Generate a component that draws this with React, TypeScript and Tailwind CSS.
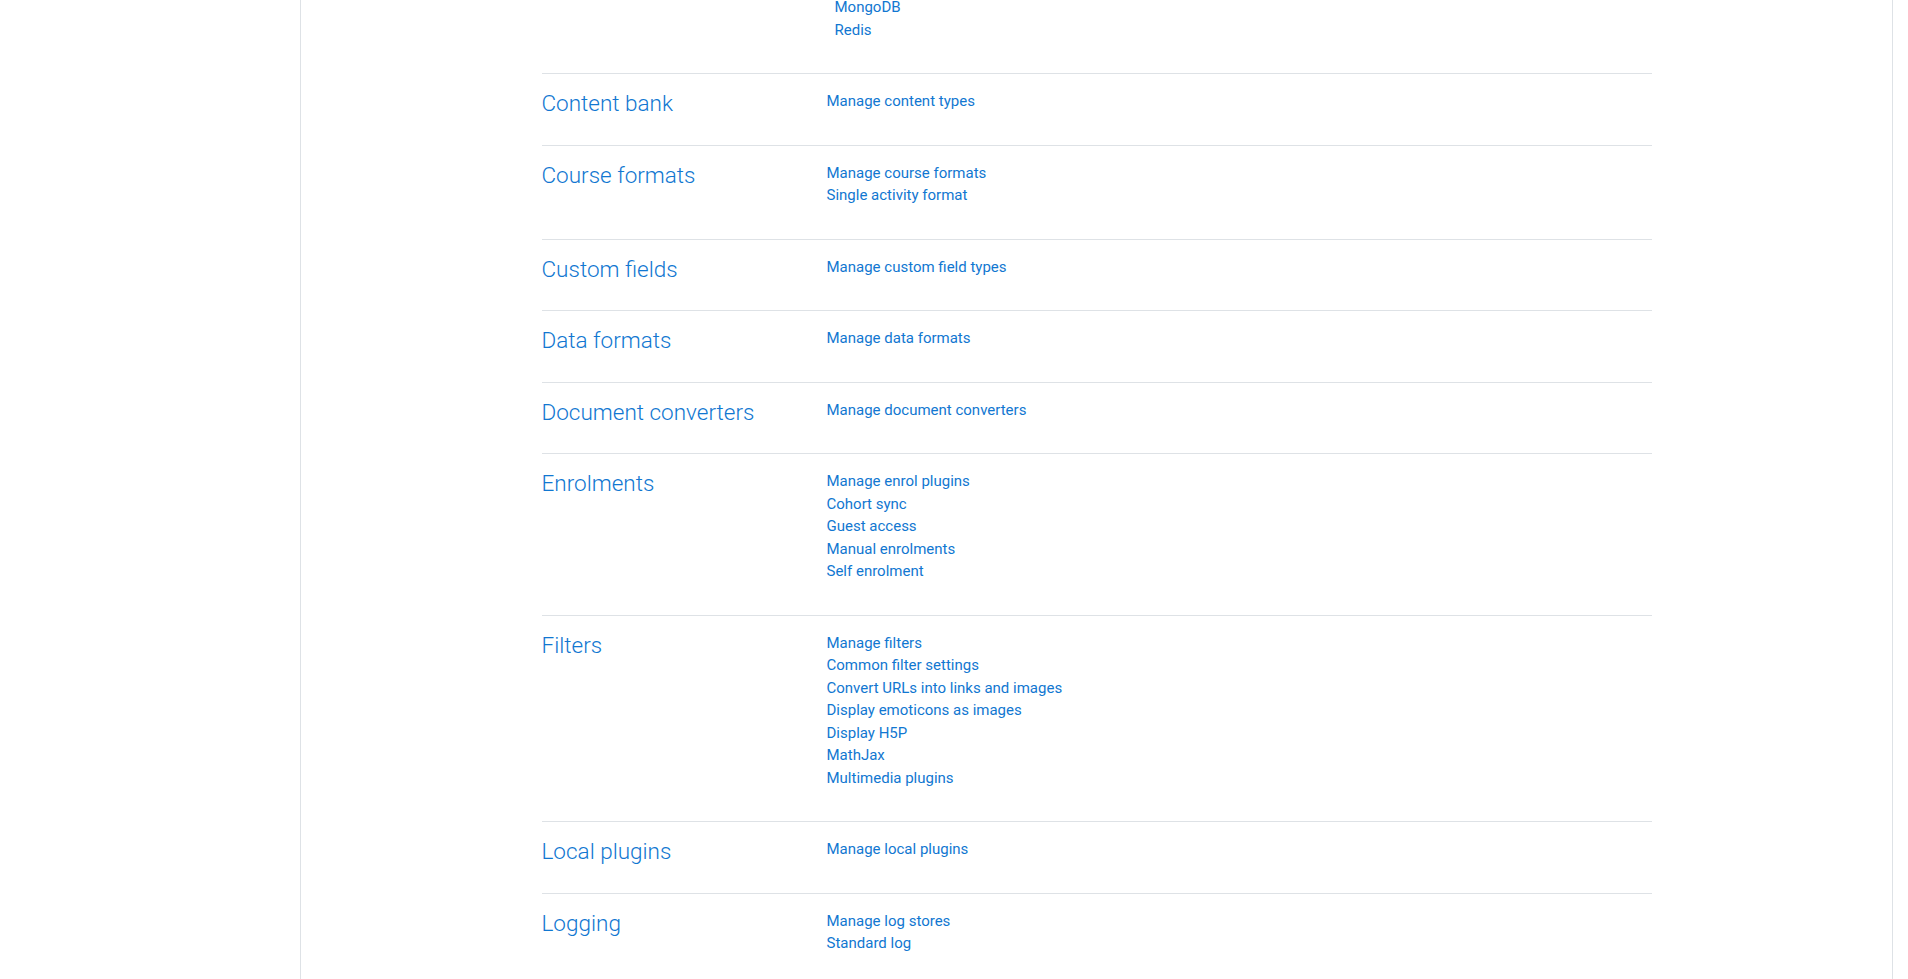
import React from 'react';

type Section = { title: string; links: string[] };

const sections: Section[] = [
  { title: 'Content bank', links: ['Manage content types'] },
  { title: 'Course formats', links: ['Manage course formats', 'Single activity format'] },
  { title: 'Custom fields', links: ['Manage custom field types'] },
  { title: 'Data formats', links: ['Manage data formats'] },
  { title: 'Document converters', links: ['Manage document converters'] },
  {
    title: 'Enrolments',
    links: ['Manage enrol plugins', 'Cohort sync', 'Guest access', 'Manual enrolments', 'Self enrolment'],
  },
  {
    title: 'Filters',
    links: [
      'Manage filters',
      'Common filter settings',
      'Convert URLs into links and images',
      'Display emoticons as images',
      'Display H5P',
      'MathJax',
      'Multimedia plugins',
    ],
  },
  { title: 'Local plugins', links: ['Manage local plugins'] },
  { title: 'Logging', links: ['Manage log stores', 'Standard log'] },
];

const LinkList = ({ links, nested }: { links: string[]; nested?: boolean }) => (
  <ul className={`mb-4 text-[15px] leading-[22.5px] ${nested ? 'pl-2' : ''}`}>
    {links.map((l) => (
      <li key={l}>
        <a href="#" className="text-[#1177d1]">
          {l}
        </a>
      </li>
    ))}
  </ul>
);

const SectionRow = ({ section }: { section: Section }) => (
  <div className="flex border-t border-[#dee2e6] py-4">
    <div className="w-[285px] shrink-0">
      <h4 className="text-[22.5px] font-light leading-[27px] text-[#1177d1]">{section.title}</h4>
    </div>
    <LinkList links={section.links} />
  </div>
);

export default function App() {
  return (
    <div
      className="flex h-[979px] overflow-hidden bg-white"
      style={{ fontFamily: 'Roboto, "Liberation Sans", sans-serif' }}
    >
      <div className="w-[300px] shrink-0" />
      <div className="w-[1593px] shrink-0 border-x border-[#dee2e6]">
        <div className="mx-auto max-w-[1110px]">
          {/* tail of the Caching section, scrolled partly out of view */}
          <div className="-mt-[4px] flex pb-4">
            <div className="w-[285px] shrink-0" />
            <LinkList links={['MongoDB', 'Redis']} nested />
          </div>
          {sections.map((s) => (
            <SectionRow key={s.title} section={s} />
          ))}
        </div>
      </div>
    </div>
  );
}
